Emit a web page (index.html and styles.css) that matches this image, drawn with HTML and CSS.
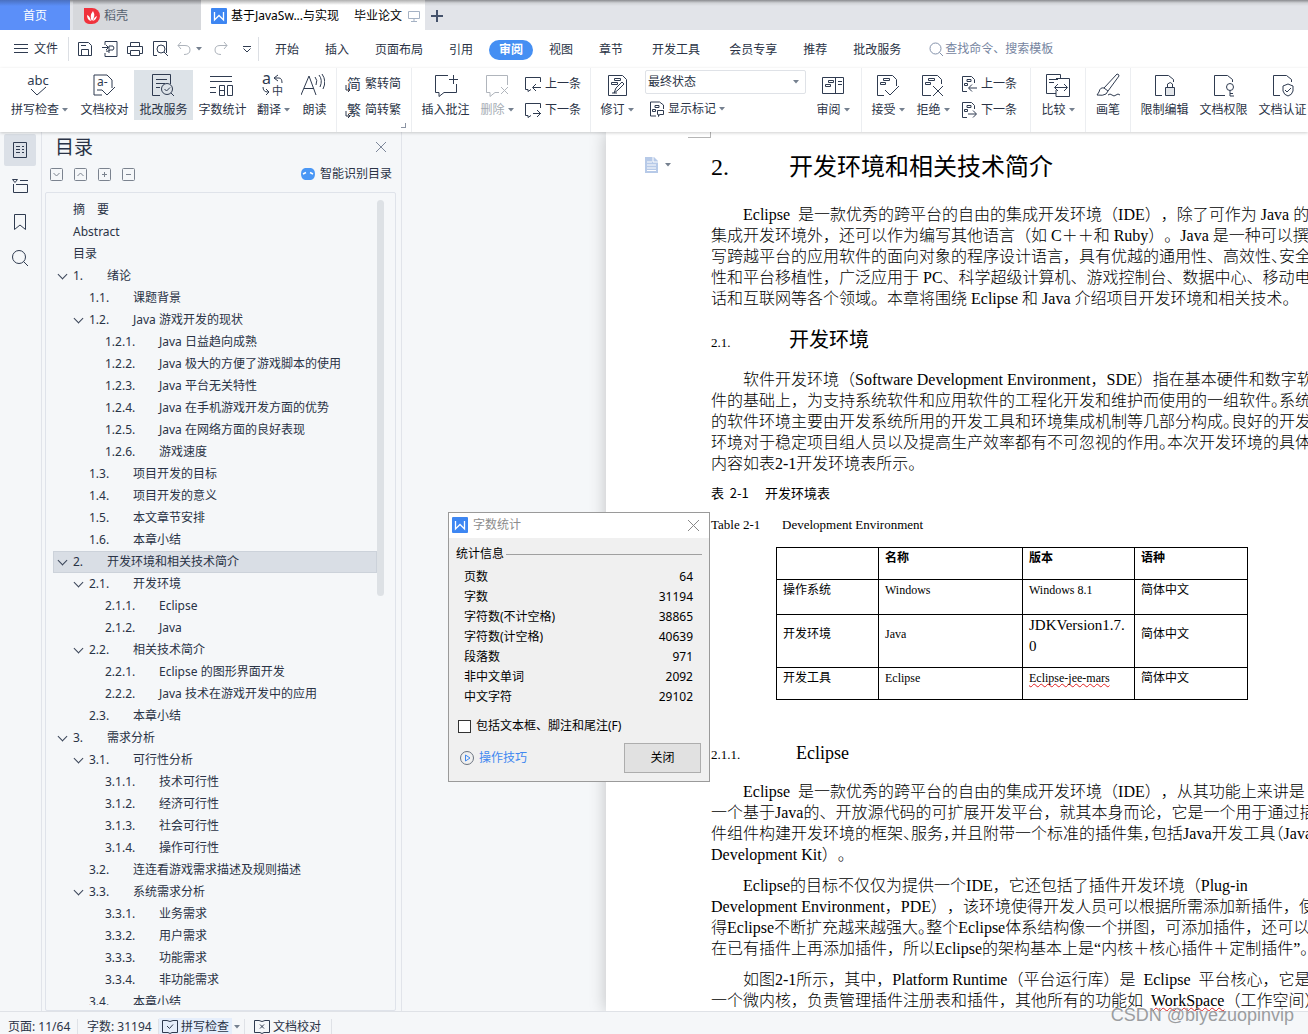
FILE: index.html
```html
<!DOCTYPE html>
<html lang="zh-CN">
<head>
<meta charset="utf-8">
<title>毕业论文</title>
<link rel="stylesheet" href="styles.css">
</head>
<body>
<svg class="defs" aria-hidden="true">
  <symbol id="i-w" viewBox="0 0 16 16"><rect width="16" height="16" rx="1" fill="#3d86f2"/><path d="M3.500 4v8L8 7.500l4.500 4.500V4" fill="none" stroke="#fff" stroke-width="1.300"/></symbol>
  <symbol id="i-down" viewBox="0 0 6 4"><path d="M0 0h6L3 3.500z" fill="#75808f" stroke="none"/></symbol>
  <symbol id="i-check-doc" viewBox="0 0 24 24"><path d="M11 22H3V2h13l5 5v8M6 17h5M11 17l5 5 8-8"/><text x="6" y="13" font-size="12">a-</text></symbol>
  <symbol id="i-abc" viewBox="0 0 24 24"><text x="12" y="12" font-size="13" text-anchor="middle">abc</text><path d="M5 16l6 6 9-8"/></symbol>
  <symbol id="i-service" viewBox="0 0 24 24"><path d="M10 22.500H2.500V1.500h18V11M6 6.500h11M6 10.500h9M6 14.500h4"/><circle cx="17" cy="16" r="5.500"/><path d="M21 20l3 3M14.500 16l2 2 3.500-3.500"/></symbol>
  <symbol id="i-count" viewBox="0 0 24 24"><path d="M1 3.500h22M1 8.500h22M1 14.500h6M1 19.500h6M10.500 12.500h5v10h-5zM18.500 12.500h5v10h-5zM10.500 17.500h5"/></symbol>
  <symbol id="i-trans" viewBox="0 0 24 24"><text x="2" y="11" font-size="16">a</text><text x="12" y="22" font-size="11">中</text><path d="M18 2l-4 3 4 3M14 5h5q3 0 3 5M3 14q0 5 5 5M6 16l3 3-3 3"/></symbol>
  <symbol id="i-read" viewBox="0 0 24 24"><path d="M0 22L8 3l7 19M3 15.500h10M14 4q3 3 1 8M18 2q4 5 1 12M21 1q5 7 1 15"/></symbol>
  <symbol id="i-simp" viewBox="0 0 16 16"><text x="2" y="13" font-size="14">简</text><path d="M1 9v5h3M3 12l2 2-2 2"/></symbol>
  <symbol id="i-trad" viewBox="0 0 16 16"><text x="2" y="13" font-size="14">繁</text><path d="M1 9v5h3M3 12l2 2-2 2"/></symbol>
  <symbol id="i-cmt" viewBox="0 0 24 24"><path d="M14 2.500H1.500v17H5v4l5-4h12.500V11M15 6.500h9M19.500 2v9"/></symbol>
  <symbol id="i-cmtdel" viewBox="0 0 24 24"><path d="M22.500 12V2.500H1.500v17H5v4l5-4h4M16 14l7 7M23 14l-7 7"/></symbol>
  <symbol id="i-prev" viewBox="0 0 16 16"><path d="M15.500 6V1.500H.5v12H3v2l3-2M16 11.500H8M11 8l-3.500 3.500L11 15"/></symbol>
  <symbol id="i-next" viewBox="0 0 16 16"><path d="M15.500 6V1.500H.5v12H3v2l3-2M8 11.500h8M12 8l3.500 3.500L12 15"/></symbol>
  <symbol id="i-rev" viewBox="0 0 24 24"><path d="M3.500 2.500h14l4 4v16h-18zM9.500 5.500h6v2h-6zM6.500 9.500h6v2h-6z"/><path d="M9 20l2-5 6-6 2 2-6 6zM7 20h5"/></symbol>
  <symbol id="i-mark" viewBox="0 0 16 16"><path d="M7 15H1.500V1h9l4 3v4M6 4.500h4v2H6zM3.500 8.500h3v2h-3zM8.500 9.500h6v4h-4l-1 2v-2h-1z"/></symbol>
  <symbol id="i-pane" viewBox="0 0 24 24"><path d="M1.500 4.500h21v16h-21zM14.500 4.500v16M7.500 7.500h5v2h-5zM4.500 11.500h5v2h-5zM17 8.500h4M17 11.500h4"/></symbol>
  <symbol id="i-accept" viewBox="0 0 24 24"><path d="M8 22.500H1.500v-20h15l4 4V13M7.500 5.500h6v2h-6zM4.500 9.500h5v2h-5zM9 17l5 5 9-9"/></symbol>
  <symbol id="i-reject" viewBox="0 0 24 24"><path d="M10 22.500H1.500v-20h15l4 4V11M7.500 5.500h6v2h-6zM4.500 9.500h5v2h-5zM12 13l10 10M22 13L12 23"/></symbol>
  <symbol id="i-dprev" viewBox="0 0 16 16"><path d="M6 15.500H1.500v-15h9l3 3V7M6 3.500h4v2H6zM3.500 7.500h3v2h-3zM16 12H8M11 8.500L7.500 12l3.500 3.500"/></symbol>
  <symbol id="i-dnext" viewBox="0 0 16 16"><path d="M6 15.500H1.500v-15h9l3 3V7M6 3.500h4v2H6zM3.500 7.500h3v2h-3zM7 12h8M12 8.500l3.500 3.500-3.500 3.500"/></symbol>
  <symbol id="i-cmp" viewBox="0 0 24 24"><path d="M10 20.500H.5v-19h14V5M3 6.500h9M3 9.500h5M10 5.500h13.500v18H10V17M9 14.500h12M12 11l-3.500 3.500L12 18M18 11l3.500 3.500L18 18"/></symbol>
  <symbol id="i-brush" viewBox="0 0 24 24"><path d="M8 15L21 1q2 0 2 2L12 18zM8 15q-4-1-5 4l-2 3q6 1 9-1l2-3M12 22q2-2 4 0t4 0 4 0"/></symbol>
  <symbol id="i-lock" viewBox="0 0 24 24"><path d="M9 22.500H2.500v-20h13l5 4V9"/><path d="M12.500 14.500h9v8h-9z" fill="#e3e6ea"/><path d="M14.500 14v-3q3-3 5 0v3"/></symbol>
  <symbol id="i-key" viewBox="0 0 24 24"><path d="M13 22.500H2.500v-20h13l5 4V9"/><circle cx="18" cy="14" r="3.500"/><path d="M18 17.500V23h4M18 20.500h3"/></symbol>
  <symbol id="i-cert" viewBox="0 0 24 24"><path d="M9 22.500H2.500v-20h13l5 4V9M17 11l5 2v5q-1 4-5 5-4-1-5-5v-5zM14 17l2 2 4-4"/></symbol>
</svg>

<header class="tabs">
  <button class="tab home">首页</button>
  <button class="tab docer"><svg width="16" height="16" viewBox="0 0 16 16"><path d="M0 0h8a8 8 0 1 1 0 16H5a5 5 0 0 1-5-5z" fill="#f0323c"/><path d="M8 13Q5 8 9 3q3 5-1 10zM7 13Q3 12 3 7q3 1 4 6zM9 13q1-4 4-5-1 4-4 5z" fill="#fff"/></svg>稻壳</button>
  <button class="tab active"><svg width="16" height="16"><use href="#i-w"/></svg><span>基于JavaSw...与实现</span><span class="second">毕业论文</span><svg width="12" height="12" viewBox="0 0 12 12" fill="none" stroke="#a5b2c4"><path d="M.5 1.500h11v7H.5zM6 8.500v3M3 11.500h6"/></svg></button>
  <button class="tab add" aria-label="新建"><svg width="12" height="12" viewBox="0 0 12 12" stroke="#45526b" stroke-width="2"><path d="M6 0v12M0 6h12"/></svg></button>
</header>

<nav class="menu">
  <button class="file"><svg width="14" height="12" viewBox="0 0 14 12"><path d="M0 1.500h14M0 5.500h14M0 9.500h14"/></svg>文件</button>
  <div class="quick">
    <button aria-label="保存"><svg width="16" height="16" viewBox="0 0 16 16"><path d="M1.500 1.500h10l3 3v10h-13zM4.500 14V8.500h7V14M4 4.500h5"/></svg></button>
    <button aria-label="输出为PDF"><svg width="16" height="16" viewBox="0 0 16 16"><path d="M3 4V.5h12v15H3V12M0 6.500h6M4 4l2.500 2.500L4 9M7 12V5h4q2 2 0 4H8q-2 2-4 1"/></svg></button>
    <button aria-label="打印"><svg width="16" height="16" viewBox="0 0 16 16"><path d="M3.500 5V1.500h9V5M3 12.500H.5v-7h15v7H13M3.500 9.500h9v5h-9z"/></svg></button>
    <button aria-label="打印预览"><svg width="16" height="16" viewBox="0 0 16 16"><path d="M5 14.500H1.500v-14h13V12"/><circle cx="9" cy="8" r="4"/><path d="M12 11l4 4"/></svg></button>
    <button class="dim" aria-label="撤销"><svg width="14" height="16" viewBox="0 0 14 16"><path d="M4 1L1 4.500 4 8M1 4.500h7q5 0 5 4.500t-6 4.500"/></svg></button>
    <button class="arr" aria-label="撤销列表"><svg width="6" height="4"><use href="#i-down"/></svg></button>
    <button class="dim" aria-label="恢复"><svg width="14" height="16" viewBox="0 0 14 16"><path d="M10 1l3 3.500L10 8M13 4.500H6q-5 0-5 4.500t6 4.500"/></svg></button>
    <button class="more" aria-label="更多"><svg width="8" height="8" viewBox="0 0 8 8"><path d="M0 1.500h8M.5 3.500L4 7l3.500-3.500"/></svg></button>
  </div>
  <div class="items">
    <button>开始</button><button>插入</button><button>页面布局</button><button>引用</button><button class="on">审阅</button><button>视图</button><button>章节</button><button class="wide">开发工具</button><button class="wide">会员专享</button><button>推荐</button><button>批改服务</button>
  </div>
  <label class="search"><svg width="15" height="15" viewBox="0 0 15 15"><circle cx="6.500" cy="6.500" r="5.500"/><path d="M10.500 10.500L14 14"/></svg><input type="text" placeholder="查找命令、搜索模板"></label>
</nav>

<section class="ribbon">
  <div class="group g1">
    <button class="big"><svg><use href="#i-abc"/></svg><span>拼写检查<svg class="dd"><use href="#i-down"/></svg></span></button>
    <button class="big"><svg><use href="#i-check-doc"/></svg><span>文档校对</span></button>
    <button class="big on"><svg><use href="#i-service"/></svg><span>批改服务</span></button>
    <button class="big"><svg><use href="#i-count"/></svg><span>字数统计</span></button>
    <button class="big"><svg><use href="#i-trans"/></svg><span>翻译<svg class="dd"><use href="#i-down"/></svg></span></button>
    <button class="big"><svg><use href="#i-read"/></svg><span>朗读</span></button>
  </div>
  <div class="group g2">
    <div class="stack"><button><svg><use href="#i-simp"/></svg>繁转简</button><button><svg><use href="#i-trad"/></svg>简转繁</button></div>
    <i class="corner"></i>
  </div>
  <div class="group g3">
    <button class="big"><svg><use href="#i-cmt"/></svg><span>插入批注</span></button>
    <button class="big dim"><svg><use href="#i-cmtdel"/></svg><span>删除<svg class="dd"><use href="#i-down"/></svg></span></button>
    <div class="stack"><button><svg><use href="#i-prev"/></svg>上一条</button><button><svg><use href="#i-next"/></svg>下一条</button></div>
  </div>
  <div class="group g4">
    <button class="big"><svg><use href="#i-rev"/></svg><span>修订<svg class="dd"><use href="#i-down"/></svg></span></button>
    <div class="state">
      <div class="pick"><select aria-label="显示状态"><option>最终状态</option></select><svg class="dd"><use href="#i-down"/></svg></div>
      <button><svg><use href="#i-mark"/></svg>显示标记<svg class="dd"><use href="#i-down"/></svg></button>
    </div>
    <button class="big"><svg><use href="#i-pane"/></svg><span>审阅<svg class="dd"><use href="#i-down"/></svg></span></button>
  </div>
  <div class="group g5">
    <button class="big"><svg><use href="#i-accept"/></svg><span>接受<svg class="dd"><use href="#i-down"/></svg></span></button>
    <button class="big"><svg><use href="#i-reject"/></svg><span>拒绝<svg class="dd"><use href="#i-down"/></svg></span></button>
    <div class="stack"><button><svg><use href="#i-dprev"/></svg>上一条</button><button><svg><use href="#i-dnext"/></svg>下一条</button></div>
  </div>
  <div class="group g6"><button class="big"><svg><use href="#i-cmp"/></svg><span>比较<svg class="dd"><use href="#i-down"/></svg></span></button></div>
  <div class="group g7"><button class="big"><svg><use href="#i-brush"/></svg><span>画笔</span></button></div>
  <div class="group g8">
    <button class="big"><svg><use href="#i-lock"/></svg><span>限制编辑</span></button>
    <button class="big"><svg><use href="#i-key"/></svg><span>文档权限</span></button>
    <button class="big"><svg><use href="#i-cert"/></svg><span>文档认证</span></button>
  </div>
</section>

<main class="work">
  <aside class="rail">
    <button class="on" aria-label="目录"><svg width="16" height="16" viewBox="0 0 16 16"><path d="M1.500.5h13v15h-13zM4 4.500h4M10 4.500h2M4 7.500h4M10 7.500h2M4 10.500h4M10 10.500h2"/></svg></button>
    <button aria-label="章节"><svg width="16" height="16" viewBox="0 0 16 16"><path d="M.5 1.500h5L3 4.500zM8 2.500h8M1.500 6v8.500h14v-8H4"/></svg></button>
    <button aria-label="书签"><svg width="16" height="18" viewBox="0 0 16 18"><path d="M2.500 1.500h11v15L8 12l-5.500 4.500z"/></svg></button>
    <button aria-label="查找"><svg width="18" height="18" viewBox="0 0 18 18"><circle cx="8" cy="8" r="6.500"/><path d="M12.500 12.500L17 17"/></svg></button>
  </aside>
  <section class="panel">
    <div class="phead"><h2>目录</h2><button aria-label="关闭目录"><svg width="10" height="10" viewBox="0 0 10 10"><path d="M0 0l10 10M10 0L0 10"/></svg></button></div>
    <div class="ptools">
      <button aria-label="展开"><svg viewBox="0 0 13 13"><rect x=".5" y=".5" width="12" height="12" rx="1"/><path d="M3.500 5l3 3 3-3"/></svg></button>
      <button aria-label="收起"><svg viewBox="0 0 13 13"><rect x=".5" y=".5" width="12" height="12" rx="1"/><path d="M3.500 8l3-3 3 3"/></svg></button>
      <button aria-label="增加"><svg viewBox="0 0 13 13"><rect x=".5" y=".5" width="12" height="12" rx="1"/><path d="M4 6.500h5M6.500 4v5"/></svg></button>
      <button aria-label="减少"><svg viewBox="0 0 13 13"><rect x=".5" y=".5" width="12" height="12" rx="1"/><path d="M4 6.500h5"/></svg></button>
      <button class="smart"><svg viewBox="0 0 14 12"><path d="M4 0h6q4 1 4 6t-4 6H4Q0 11 0 6t4-6z" fill="#4a97f5" stroke="none"/><path d="M2 6l3-1.500M12 6L9 4.500" stroke="#fff" stroke-width="1.500"/></svg>智能识别目录</button>
    </div>
    <div class="box">
      <ul class="toc">
        <li class="l1">摘&emsp;要</li>
        <li class="l1">Abstract</li>
        <li class="l1">目录</li>
        <li class="l1 open"><b>1.</b>绪论</li>
        <li class="l2"><b>1.1.</b>课题背景</li>
        <li class="l2 open"><b>1.2.</b>Java 游戏开发的现状</li>
        <li class="l3"><b>1.2.1.</b>Java 日益趋向成熟</li>
        <li class="l3"><b>1.2.2.</b>Java 极大的方便了游戏脚本的使用</li>
        <li class="l3"><b>1.2.3.</b>Java 平台无关特性</li>
        <li class="l3"><b>1.2.4.</b>Java 在手机游戏开发方面的优势</li>
        <li class="l3"><b>1.2.5.</b>Java 在网络方面的良好表现</li>
        <li class="l3"><b>1.2.6.</b>游戏速度</li>
        <li class="l2"><b>1.3.</b>项目开发的目标</li>
        <li class="l2"><b>1.4.</b>项目开发的意义</li>
        <li class="l2"><b>1.5.</b>本文章节安排</li>
        <li class="l2"><b>1.6.</b>本章小结</li>
        <li class="l1 open sel"><b>2.</b>开发环境和相关技术简介</li>
        <li class="l2 open"><b>2.1.</b>开发环境</li>
        <li class="l3"><b>2.1.1.</b>Eclipse</li>
        <li class="l3"><b>2.1.2.</b>Java</li>
        <li class="l2 open"><b>2.2.</b>相关技术简介</li>
        <li class="l3"><b>2.2.1.</b>Eclipse 的图形界面开发</li>
        <li class="l3"><b>2.2.2.</b>Java 技术在游戏开发中的应用</li>
        <li class="l2"><b>2.3.</b>本章小结</li>
        <li class="l1 open"><b>3.</b>需求分析</li>
        <li class="l2 open"><b>3.1.</b>可行性分析</li>
        <li class="l3"><b>3.1.1.</b>技术可行性</li>
        <li class="l3"><b>3.1.2.</b>经济可行性</li>
        <li class="l3"><b>3.1.3.</b>社会可行性</li>
        <li class="l3"><b>3.1.4.</b>操作可行性</li>
        <li class="l2"><b>3.2.</b>连连看游戏需求描述及规则描述</li>
        <li class="l2 open"><b>3.3.</b>系统需求分析</li>
        <li class="l3"><b>3.3.1.</b>业务需求</li>
        <li class="l3"><b>3.3.2.</b>用户需求</li>
        <li class="l3"><b>3.3.3.</b>功能需求</li>
        <li class="l3"><b>3.3.4.</b>非功能需求</li>
        <li class="l2"><b>3.4.</b>本章小结</li>
      </ul>
      <div class="bar"><i></i></div>
    </div>
  </section>
  <div class="canvas">
    <article class="page">
      <i class="crop"></i>
      <div class="flag"><svg width="14" height="16" viewBox="0 0 14 16"><path d="M0 0h9l4 4v12H0z" fill="#b7cae8"/><path d="M2 5h5M2 8h9M2 11h9M2 13.500h9M8 0v5h5" stroke="#fff" fill="none"/></svg><svg class="dd"><use href="#i-down"/></svg></div>
      <h1><span class="num">2.</span>开发环境和相关技术简介</h1>
      <p class="in">Eclipse&nbsp; 是一款优秀的跨平台的自由的集成开发环境（IDE），除了可作为 Java 的<br>集成开发环境外，还可以作为编写其他语言（如 C＋＋和 Ruby）。Java 是一种可以撰<br>写跨越平台的应用软件的面向对象的程序设计语言，具有优越的通用性、高效性<span class="half">、</span>安全<br>性和平台移植性，广泛应用于 PC、科学超级计算机、游戏控制台、数据中心、移动电<br>话和互联网等各个领域。本章将围绕 Eclipse 和 Java 介绍项目开发环境和相关技术。</p>
      <h2><span class="num">2.1.</span>开发环境</h2>
      <p class="in">软件开发环境（Software Development Environment，SDE）指在基本硬件和数字软<br>件的基础上，为支持系统软件和应用软件的工程化开发和维护而使用的一组软件<span class="half">。</span>系统<br>的软件环境主要由开发系统所用的开发工具和环境集成机制等几部分构成<span class="half">。</span>良好的开发<br>环境对于稳定项目组人员以及提高生产效率都有不可忽视的作用<span class="half">。</span>本次开发环境的具体<br>内容如表2-1开发环境表所示。</p>
      <p class="cap zh"><span>表&nbsp; 2-1</span>开发环境表</p>
      <p class="cap"><span>Table 2-1</span>Development Environment</p>
      <table>
        <tr><th class="c1"></th><th class="c2">名称</th><th class="c3">版本</th><th class="c4">语种</th></tr>
        <tr class="r2"><td>操作系统</td><td>Windows</td><td>Windows 8.1</td><td>简体中文</td></tr>
        <tr class="r3"><td>开发环境</td><td>Java</td><td class="large">JDKVersion1.7.<br>0</td><td>简体中文</td></tr>
        <tr><td>开发工具</td><td>Eclipse</td><td><span class="typo">Eclipse-jee-mars</span></td><td>简体中文</td></tr>
      </table>
      <h3><span class="num">2.1.1.</span>Eclipse</h3>
      <p class="in">Eclipse&nbsp; 是一款优秀的跨平台的自由的集成开发环境（IDE），从其功能上来讲是<br>一个基于Java的、开放源代码的可扩展开发平台，就其本身而论，它是一个用于通过插<br>件组件构建开发环境的框架<span class="half">、</span>服务<span class="half">，</span>并且附带一个标准的插件集<span class="half">，</span>包括Java开发工具<span class="half">（</span>Java<br>Development Kit）。</p>
      <p class="in">Eclipse的目标不仅仅为提供一个IDE，它还包括了插件开发环境（Plug-in<br>Development Environment，PDE），该环境使得开发人员可以根据所需添加新插件，使<br>得Eclipse不断扩充越来越强大<span class="half">。</span>整个Eclipse体系结构像一个拼图，可添加插件，还可以<br>在已有插件上再添加插件，所以Eclipse的架构基本上是“内核＋核心插件＋定制插件”。</p>
      <p class="in">如图2-1所示，其中，Platform Runtime（平台运行库）是&nbsp; Eclipse&nbsp; 平台核心，它是<br>一个微内核，负责管理插件注册表和插件，其他所有的功能如&nbsp; <span class="typo">WorkSpace</span>（工作空间）</p>
    </article>
  </div>
</main>

<footer class="status">
  <span class="s1">页面: 11/64</span><span class="s2">字数: 31194</span>
  <button class="spell"><svg width="16" height="15" viewBox="0 0 16 15"><path d="M5 1.500H.5v12H6l2 1 2-1h5.500v-12H11M5 1.500l3 1 3-1M5 7l2.500 2.500L11 5.500"/></svg>拼写检查</button>
  <button class="arrow" aria-label="拼写选项"><svg class="dd"><use href="#i-down"/></svg></button>
  <button class="proof"><svg width="16" height="15" viewBox="0 0 16 15"><path d="M5 1.500H.5v12H6l2 1 2-1h5.500v-12H11M5 1.500l3 1 3-1M6 5.500l4 4M10 5.500l-4 4"/></svg>文档校对</button>
</footer>

<div class="dialog" role="dialog" aria-label="字数统计">
  <div class="dtitle"><svg width="16" height="16"><use href="#i-w"/></svg><span>字数统计</span><button aria-label="关闭窗口"><svg width="11" height="11" viewBox="0 0 11 11" stroke="#888"><path d="M0 0l11 11M11 0L0 11"/></svg></button></div>
  <div class="dbody">
    <div class="legend">统计信息</div>
    <dl>
      <dt>页数</dt><dd>64</dd><dt>字数</dt><dd>31194</dd><dt>字符数(不计空格)</dt><dd>38865</dd><dt>字符数(计空格)</dt><dd>40639</dd><dt>段落数</dt><dd>971</dd><dt>非中文单词</dt><dd>2092</dd><dt>中文字符</dt><dd>29102</dd>
    </dl>
    <label class="inc"><input type="checkbox">包括文本框、脚注和尾注(F)</label>
    <div class="dfoot"><a href="#"><svg width="14" height="14" viewBox="0 0 14 14" fill="none"><circle cx="7" cy="7" r="6.500" stroke="#6b7480"/><path d="M5.500 4v6L10 7z" stroke="#3f88f0"/></svg>操作技巧</a><button>关闭</button></div>
  </div>
</div>
<div class="mark">CSDN @biyezuopinvip</div>
</body>
</html>
```
FILE: styles.css
```css
* { box-sizing: border-box; }
body {
  margin: 0;
  height: 100vh;
  display: flex;
  flex-direction: column;
  overflow: hidden;
  position: relative;
  font: 12px/16px "Noto Sans", "Noto Sans CJK SC", sans-serif;
  color: #2a3346;
  background: #fff;
}
button {
  font: inherit;
  color: inherit;
  background: none;
  border: 0;
  padding: 0;
  white-space: nowrap;
}
h1, h2, h3, p, ul, dl, dd { margin: 0; padding: 0; }
.menu svg, .ribbon svg, .rail svg, .panel svg, .status svg {
  fill: none;
  stroke: #2f3b50;
}
svg { display: block; flex: none; }
svg.defs { display: none; }
svg text { fill: #2f3b50; stroke: none; }
svg.dd { width: 6px; height: 4px; }

/* window tabs */
.tabs {
  display: flex;
  height: 30px;
  flex: none;
  background: linear-gradient(#8a8b8f, #d0d2d6 3px, #e2e4e9 6px);
}
.tab { display: flex; align-items: center; padding-top: 2px; }
.home {
  width: 70px;
  justify-content: center;
  color: #fff;
  background: linear-gradient(#4a70c0, #5b8ff9 6px);
  margin-right: 3px;
}
.docer {
  width: 128px;
  padding-left: 11px;
  gap: 4px;
  color: #55606f;
  background: linear-gradient(#8a8b8f, #d6d8dc 5px);
}
.active {
  width: 224px;
  padding-left: 10px;
  gap: 4px;
  color: #000;
  background: linear-gradient(#b0b0b0, #fff 5px);
}
.active .second { margin-left: 11px; margin-right: 2px; }
.add { padding-left: 6px; }

/* menu row */
.menu { display: flex; align-items: center; height: 38px; flex: none; }
.file {
  display: flex;
  align-items: center;
  gap: 6px;
  padding-left: 14px;
  width: 69px;
  height: 24px;
  border-right: 1px solid #dcdfe4;
}
.quick {
  display: flex;
  align-items: center;
  width: 190px;
  height: 24px;
  padding-left: 8px;
  gap: 9px;
  border-right: 1px solid #dcdfe4;
}
.quick .dim svg { stroke: #adb3bb; }
.quick .arr { margin: 0 3px 0 -4px; }
.quick .more { margin-left: 6px; }
.items { display: flex; align-items: center; padding: 2px 0 0 16px; gap: 26px; }
.items .on {
  height: 20px;
  padding: 0 10px;
  margin: 0 -10px;
  border-radius: 10px;
  background: #458ff3;
  color: #fff;
  font-weight: bold;
}
.items .wide { margin-left: 3px; }
.search { display: flex; align-items: center; gap: 1px; padding-left: 28px; }
.search svg { stroke: #8492ab; }
.search input {
  width: 140px;
  border: 0;
  padding: 0;
  font: inherit;
  background: none;
}
.search input::placeholder { color: #76859f; opacity: 1; }

/* ribbon */
.ribbon {
  display: flex;
  height: 64px;
  flex: none;
  position: relative;
  box-shadow: 0 1px 3px #00000030;
  overflow: clip;
  overflow-clip-margin: 4px;
  z-index: 1;
}
.group { display: grid; flex: none; border-right: 1px solid #eceef1; position: relative; }
.g1 { width: 337px; padding-left: 4px; grid-template-columns: 71px 59px 59px 59px 43px 39px; }
.g2 { width: 75px; padding-left: 8px; }
.g3 { width: 179px; padding-left: 4px; grid-template-columns: 59px 50px 60px; }
.g4 { width: 271px; padding-left: 4px; grid-template-columns: 50px 161px 54px; }
.g5 { width: 169px; padding-left: 3px; grid-template-columns: 46px 50px 60px; }
.g6 { width: 55px; }
.g7 { width: 45px; }
.g8 { padding-left: 4px; grid-template-columns: 59px 59px 59px; border: 0; }
.big {
  display: flex;
  flex-direction: column;
  align-items: center;
  height: 50px;
  margin-top: 2px;
  padding-top: 3px;
  gap: 5px;
}
.big > svg { width: 24px; height: 24px; }
.big span { display: flex; align-items: center; gap: 3px; }
.g1 .big > svg { margin-right: 3px; }
.g3 .big.dim, .g4 .big:first-child, .g5 .big:nth-child(2) { margin-right: 6px; }
.big.on { background: #dde3e8; }
.ribbon .dim svg { stroke: #b0b5bc; }
.dim { color: #a5abb3; }
.stack { display: grid; grid-template-rows: 16px 16px; row-gap: 10px; padding-top: 8px; }
.stack button { display: flex; align-items: center; gap: 4px; }
.stack svg { width: 16px; height: 16px; }
.corner {
  position: absolute;
  right: 5px;
  bottom: 4px;
  width: 5px;
  height: 5px;
  border: solid #8b94a3;
  border-width: 0 1px 1px 0;
}
.state { padding-top: 2px; }
.pick { display: grid; grid-template-columns: 1fr 12px; align-items: center; height: 24px; border: 1px solid #dfe2e7; border-radius: 2px; }
.pick select {
  appearance: none;
  border: 0;
  padding: 0 0 0 2px;
  font: inherit;
  color: inherit;
  background: none;
}
.state button { display: flex; align-items: center; gap: 3px; margin-top: 7px; padding-left: 4px; }
.state button svg:first-child { width: 16px; height: 16px; }

/* work area */
.work { display: flex; flex: 1; min-height: 0; background: #f5f7f9; }
.rail {
  width: 42px;
  flex: none;
  padding: 2px 0 0 4px;
  display: flex;
  flex-direction: column;
  gap: 4px;
  border-right: 1px solid #e1e4ea;
}
.rail button { width: 32px; height: 32px; display: grid; place-items: center; }
.rail .on { background: #dbe0e7; border-radius: 2px; }
.panel {
  width: 360px;
  flex: none;
  display: flex;
  flex-direction: column;
  border-right: 1px solid #e1e4ea;
  padding: 0 5px 0 3px;
}
.phead { display: flex; justify-content: space-between; align-items: center; height: 30px; padding: 0 10px; }
.phead h2 { font-size: 19px; line-height: 24px; font-weight: normal; }
.phead svg { stroke: #7d879a; }
.ptools { display: flex; align-items: center; gap: 11px; height: 24px; padding: 0 4px 0 5px; }
.ptools svg { width: 13px; height: 13px; stroke: #7b838f; }
.panel .smart { display: flex; align-items: center; gap: 5px; margin-left: auto; }
.panel .smart svg { width: 14px; height: 12px; }
.box {
  flex: 1;
  min-height: 0;
  display: flex;
  margin-top: 6px;
  padding: 6px 10px 5px 7px;
  border: 1px solid #dfe3ea;
  border-radius: 2px;
}
.toc { flex: 1; list-style: none; overflow: hidden; }
.toc li { display: flex; height: 22px; line-height: 22px; border: 1px solid transparent; align-items: center; white-space: pre; }
.toc b { font-weight: normal; flex: none; }
.l1 { padding-left: 19px; }
.l2 { padding-left: 35px; }
.l3 { padding-left: 51px; }
.l1 b { width: 34px; }
.l2 b { width: 44px; }
.l3 b { width: 54px; }
.toc .sel { background: #d9dee5; border-color: #ccd2da; }
.open::before {
  content: "";
  box-sizing: border-box;
  width: 7px;
  height: 7px;
  margin: -4px 7px 0 -14px;
  border: solid #3a4558;
  border-width: 0 1px 1px 0;
  transform: rotate(45deg);
  flex: none;
}
.bar { width: 8px; }
.bar i { display: block; width: 7px; height: 396px; margin: 1px 0 0; border-radius: 4px; background: #dde1e5; }

/* document */
.canvas { flex: 1; min-width: 0; overflow: hidden; display: flex; padding-left: 204px; }
.page {
  flex: 1;
  min-width: 0;
  position: relative;
  background: #fff;
  box-shadow: 0 0 16px #00000038;
  padding: 20px 0 0 105px;
  white-space: nowrap;
  color: #000;
  font: 16px/21px "Liberation Serif", "Noto Sans CJK SC", serif;
  font-variant-ligatures: none;
  text-spacing-trim: space-all;
}
.page h1, .page h2, .page h3 { font-weight: normal; display: flex; align-items: baseline; }
.page h1 { font-size: 24px; line-height: 30px; }
.page h2 { font-size: 20px; line-height: 24px; margin: 19px 0 14px; }
.page h3 { font-size: 18px; line-height: 24px; margin: 41px 0 14px; }
.num { width: 78px; }
h2 .num, h3 .num { font-size: 13px; }
h3 .num { width: 85px; }
.in { text-indent: 32px; margin-top: 10px; font-weight: 300; }
h1 + .in { margin-top: 22px; }
.half { font-feature-settings: "halt"; }
.cap { font-size: 13px; line-height: 20px; margin-top: 12px; display: flex; }
.cap span { width: 71px; }
.cap.zh { font-family: "Noto Sans CJK SC", sans-serif; margin-top: 9px; }
.cap.zh span { width: 54px; }
table {
  margin: 12px 0 0 65px;
  border-collapse: collapse;
  font-size: 12px;
  line-height: 21px;
}
th, td { border: 1px solid #000; height: 32px; padding: 0 6px 10px; text-align: left; }
.r2 td { height: 35px; padding-bottom: 13px; }
.r3 td { height: 53px; padding-bottom: 13px; }
.c1 { width: 102px; }
.c2 { width: 144px; }
.c3 { width: 112px; }
.c4 { width: 113px; }
.r3 .large { font-size: 15px; padding-bottom: 10px; }
.typo { text-decoration: underline wavy #e02020 1px; text-decoration-skip-ink: none; text-underline-offset: 1px; }
.crop { position: absolute; left: 82px; top: 0; width: 23px; height: 6px; border: solid #b5b5b5; border-width: 0 1px 1px 0; }
.flag { position: absolute; left: 39px; top: 25px; display: flex; align-items: center; gap: 6px; }

/* status bar */
.status {
  display: flex;
  flex: none;
  align-items: center;
  height: 23px;
  padding: 7px 0 0 8px;
  background: #f5f7f9;
  border-top: 1px solid #dfe2e7;
}
.status > * { border-right: 1px solid #dfe2e7; height: 16px; line-height: 16px; }
.status button { display: flex; align-items: center; }
.s1 { width: 70px; }
.s2 { width: 81px; padding-left: 9px; }
.status .spell { width: 73px; height: 18px; gap: 3px; padding-left: 3px; background: #e5eefb; border: 0; }
.status .arrow { width: 13px; padding-left: 2px; }
.status .proof { width: 87px; gap: 3px; padding-left: 9px; }

/* word count window */
.dialog {
  position: absolute;
  left: 448px;
  top: 512px;
  width: 262px;
  border: 1px solid #9a9a9a;
  background: #f0f0f0;
  color: #000;
  z-index: 2;
}
.dtitle { display: flex; align-items: center; height: 25px; padding: 0 10px 1px 3px; gap: 5px; background: #fff; color: #8c8c8c; }
.dtitle button { margin-left: auto; }
.dbody { padding: 8px 7px; }
.legend { display: flex; align-items: center; gap: 2px; }
.legend::after { content: ""; flex: 1; height: 1px; background: #a0a0a0; }
.dialog dl { display: grid; grid-template-columns: 1fr auto; line-height: 20px; padding: 5px 9px 0 8px; }
.dialog dd { text-align: right; }
.inc { display: flex; align-items: center; gap: 5px; margin: 11px 0 0 2px; }
.inc input { appearance: none; width: 13px; height: 13px; margin: 0; border: 1px solid #333; background: #fff; }
.dfoot { display: flex; justify-content: space-between; align-items: center; padding: 9px 1px 0 4px; }
.dfoot a { display: flex; align-items: center; gap: 5px; color: #3f88f0; text-decoration: none; }
.dfoot button { width: 77px; height: 30px; border: 1px solid #adadad; background: #e1e1e1; }

.mark {
  position: absolute;
  right: 14px;
  bottom: 8px;
  font: 18px/22px "Liberation Sans", sans-serif;
  color: #9b9da0;
  z-index: 3;
}
```
